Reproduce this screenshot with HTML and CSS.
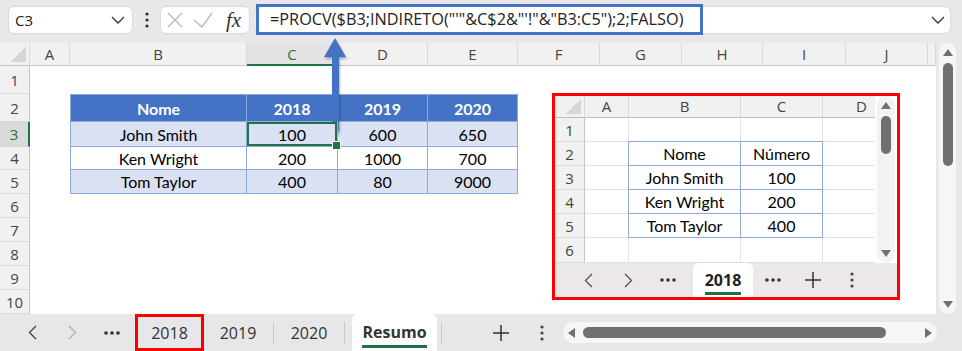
FILE: index.html
```html
<!DOCTYPE html>
<html lang="pt">
<head>
    <meta charset="UTF-8">
    <meta name="viewport" content="width=device-width, initial-scale=1.0">
    <title>PROCV com INDIRETO</title>
    <link rel="stylesheet" href="styles.css">
</head>

<body>
    <div class="app">
        <!-- barra de fórmulas -->
        <div class="topbar">
            <div class="namebox">
                <span>C3</span>
                <svg width="14" height="8" viewBox="0 0 14 8"><path d="M1 1l6 6 6-6" fill="none" stroke="#333" stroke-width="1.3"/></svg>
            </div>
            <div class="grip">
                <svg width="4" height="16" viewBox="0 0 4 16"><circle cx="2" cy="2" r="1.6" fill="#333"/><circle cx="2" cy="8" r="1.6" fill="#333"/><circle cx="2" cy="14" r="1.6" fill="#333"/></svg>
            </div>
            <div class="fxbox">
                <svg class="ico-x" width="16" height="16" viewBox="0 0 16 16"><path d="M1 1l14 14M15 1L1 15" stroke="#b8b8b8" stroke-width="1.3"/></svg>
                <svg class="ico-ok" width="20" height="16" viewBox="0 0 20 16"><path d="M1 8l8 7L19 1" fill="none" stroke="#b8b8b8" stroke-width="1.3"/></svg>
                <span class="fx">fx</span>
            </div>
            <div class="formula">
                <span class="formula-hl">=PROCV($B3;INDIRETO("'"&amp;C$2&amp;"'!"&amp;"B3:C5");2;FALSO)</span>
                <svg class="formula-chev" width="14" height="8" viewBox="0 0 14 8"><path d="M1 1l6 6 6-6" fill="none" stroke="#333" stroke-width="1.3"/></svg>
            </div>
        </div>

        <!-- planilha Resumo -->
        <div class="main">
            <div class="sheet">
                <div class="ch corner"></div>
                <div class="ch">A</div>
                <div class="ch">B</div>
                <div class="ch sel">C</div>
                <div class="ch">D</div>
                <div class="ch">E</div>
                <div class="ch">F</div>
                <div class="ch">G</div>
                <div class="ch">H</div>
                <div class="ch">I</div>
                <div class="ch">J</div>
                <div class="ch"></div>

                <div class="rh">1</div>
                <div class="rh">2</div>
                <div class="rh sel">3</div>
                <div class="rh">4</div>
                <div class="rh">5</div>
                <div class="rh">6</div>
                <div class="rh">7</div>
                <div class="rh">8</div>
                <div class="rh">9</div>
                <div class="rh">10</div>

                <div class="data">
                    <div class="hd">Nome</div>
                    <div class="hd">2018</div>
                    <div class="hd">2019</div>
                    <div class="hd">2020</div>

                    <div class="band">John Smith</div>
                    <div class="band cur">100</div>
                    <div class="band">600</div>
                    <div class="band">650</div>

                    <div>Ken Wright</div>
                    <div>200</div>
                    <div>1000</div>
                    <div>700</div>

                    <div class="band">Tom Taylor</div>
                    <div class="band">400</div>
                    <div class="band">80</div>
                    <div class="band">9000</div>
                </div>
            </div>

            <div class="vscroll">
                <div class="vtrack">
                    <div class="tri-up"></div>
                    <div class="vthumb"></div>
                    <div class="tri-down"></div>
                </div>
            </div>
        </div>

        <!-- abas -->
        <div class="tabbar">
            <div class="nav">
                <svg width="9" height="15" viewBox="0 0 9 15"><path d="M8 1L1.5 7.5 8 14" fill="none" stroke="#444" stroke-width="1.4"/></svg>
            </div>
            <div class="nav">
                <svg width="9" height="15" viewBox="0 0 9 15"><path d="M1 1l6.5 6.5L1 14" fill="none" stroke="#b0b0b0" stroke-width="1.4"/></svg>
            </div>
            <div class="nav">
                <svg width="16" height="4" viewBox="0 0 16 4"><circle cx="2" cy="2" r="1.8" fill="#333"/><circle cx="8" cy="2" r="1.8" fill="#333"/><circle cx="14" cy="2" r="1.8" fill="#333"/></svg>
            </div>
            <div class="tab mark">2018</div>
            <div class="tab">2019</div>
            <div class="sep"></div>
            <div class="tab">2020</div>
            <div class="sep"></div>
            <div class="tab active"><span>Resumo</span></div>
            <div class="sep"></div>
            <div class="nav add">
                <svg width="18" height="18" viewBox="0 0 18 18"><path d="M9 1v16M1 9h16" stroke="#333" stroke-width="1.5"/></svg>
            </div>
            <div class="nav more">
                <svg width="4" height="16" viewBox="0 0 4 16"><circle cx="2" cy="2" r="1.6" fill="#444"/><circle cx="2" cy="8" r="1.6" fill="#444"/><circle cx="2" cy="14" r="1.6" fill="#444"/></svg>
            </div>
            <div class="hscroll">
                <div class="tri-left"></div>
                <div class="hthumb"></div>
                <div class="tri-right"></div>
            </div>
        </div>

        <!-- recorte da planilha 2018 -->
        <div class="inset">
            <div class="mini-top">
                <div class="mini-grid">
                    <div class="mch corner"></div>
                    <div class="mch">A</div>
                    <div class="mch">B</div>
                    <div class="mch">C</div>
                    <div class="mch">D</div>

                    <div class="mrh">1</div>
                    <div class="mc"></div><div class="mc"></div><div class="mc"></div><div class="mc"></div>
                    <div class="mrh">2</div>
                    <div class="mc"></div><div class="mc"></div>
                    <div class="mrh">3</div>
                    <div class="mc"></div><div class="mc"></div>
                    <div class="mrh">4</div>
                    <div class="mc"></div><div class="mc"></div>
                    <div class="mrh">5</div>
                    <div class="mc"></div><div class="mc"></div>
                    <div class="mrh">6</div>
                    <div class="mc"></div><div class="mc"></div><div class="mc"></div><div class="mc"></div>

                    <div class="mini-data">
                        <div>Nome</div>
                        <div>Número</div>
                        <div>John Smith</div>
                        <div>100</div>
                        <div>Ken Wright</div>
                        <div>200</div>
                        <div>Tom Taylor</div>
                        <div>400</div>
                    </div>
                </div>
                <div class="mini-scroll">
                    <div class="mini-track">
                        <div class="tri-up"></div>
                        <div class="mini-thumb"></div>
                        <div class="tri-down"></div>
                    </div>
                </div>
            </div>
            <div class="mini-tabs">
                <div class="nav">
                    <svg width="9" height="15" viewBox="0 0 9 15"><path d="M8 1L1.5 7.5 8 14" fill="none" stroke="#555" stroke-width="1.4"/></svg>
                </div>
                <div class="nav">
                    <svg width="9" height="15" viewBox="0 0 9 15"><path d="M1 1l6.5 6.5L1 14" fill="none" stroke="#555" stroke-width="1.4"/></svg>
                </div>
                <div class="nav">
                    <svg width="16" height="4" viewBox="0 0 16 4"><circle cx="2" cy="2" r="1.8" fill="#333"/><circle cx="8" cy="2" r="1.8" fill="#333"/><circle cx="14" cy="2" r="1.8" fill="#333"/></svg>
                </div>
                <div class="mini-tab"><span>2018</span></div>
                <div class="nav">
                    <svg width="16" height="4" viewBox="0 0 16 4"><circle cx="2" cy="2" r="1.8" fill="#333"/><circle cx="8" cy="2" r="1.8" fill="#333"/><circle cx="14" cy="2" r="1.8" fill="#333"/></svg>
                </div>
                <div class="nav">
                    <svg width="18" height="18" viewBox="0 0 18 18"><path d="M9 1v16M1 9h16" stroke="#333" stroke-width="1.5"/></svg>
                </div>
                <div class="nav more">
                    <svg width="4" height="16" viewBox="0 0 4 16"><circle cx="2" cy="2" r="1.6" fill="#444"/><circle cx="2" cy="8" r="1.6" fill="#444"/><circle cx="2" cy="14" r="1.6" fill="#444"/></svg>
                </div>
            </div>
        </div>

        <!-- seta apontando para a fórmula -->
        <svg class="arrow" width="36" height="100" viewBox="0 0 36 100">
            <path d="M17 4L28 23H21V95a3 3 0 0 1-7 0V23H6z" fill="#4472c4"/>
        </svg>
    </div>
</body>
</html>
```

FILE: styles.css
```css
*
{
    box-sizing: border-box;
}

body
{
    margin: 0;
    background: #fff;
    font-family: "Open Sans", "Noto Sans", sans-serif;
    color: #222;
}

.app
{
    position: relative;
    width: 962px;
    height: 351px;
    overflow: hidden;
}

/* barra de fórmulas */
.topbar
{
    height: 43px;
    background: #e9e7ea;
    display: flex;
    align-items: flex-start;
    padding-top: 6px;
}

.namebox
{
    margin-left: 8px;
    width: 125px;
    height: 28px;
    background: #fff;
    border: 1px solid #dcd9dc;
    border-radius: 6px;
    display: flex;
    align-items: center;
    justify-content: space-between;
    padding: 0 7px 0 6px;
    font-size: 15px;
}

.grip
{
    width: 27px;
    height: 28px;
    display: flex;
    align-items: center;
    justify-content: center;
}

.fxbox
{
    width: 90px;
    height: 28px;
    background: #fff;
    border: 1px solid #dcd9dc;
    border-radius: 6px;
    display: flex;
    align-items: center;
}

.ico-x
{
    margin-left: 6px;
}

.ico-ok
{
    margin-left: 10px;
}

.fx
{
    margin-left: 13px;
    font-family: "Liberation Serif", serif;
    font-style: italic;
    font-size: 21px;
    color: #333;
    line-height: 1;
}

.formula
{
    margin-left: 6px;
    width: 695px;
    height: 28px;
    background: #fff;
    border: 1px solid #dcd9dc;
    border-radius: 6px;
    display: flex;
    align-items: flex-start;
}

.formula-hl
{
    margin: -3px 0 0 -1px;
    width: 447px;
    height: 31px;
    border: 3px solid #4472c4;
    padding-left: 11px;
    font-size: 16.3px;
    line-height: 25px;
    white-space: nowrap;
}

.formula-chev
{
    margin: 9px 5px 0 auto;
}

/* planilha */
.main
{
    display: flex;
    height: 271px;
}

.sheet
{
    width: 936px;
    display: grid;
    grid-template-columns: 30px 40px 177px 91px 90px 90px 82px 82px 81px 83px 82px 8px;
    grid-template-rows: 23px 28px 28px 25px 23px repeat(6, 24px);
    background: #fff;
}

.ch
{
    background: #f1f1f1;
    border-right: 1px solid #dadada;
    border-bottom: 1px solid #c4c4c4;
    text-align: center;
    font-size: 15px;
    line-height: 22px;
    color: #444;
}

.ch.sel
{
    background: #e3e3e3;
    color: #217346;
    border-bottom: 2px solid #217346;
}

.corner
{
    position: relative;
}

.corner::after
{
    content: "";
    position: absolute;
    right: 3px;
    bottom: 3px;
    width: 15px;
    height: 15px;
    background: linear-gradient(to top left, #d6d6d6 50%, transparent 50%);
}

.rh
{
    grid-column: 1;
    background: #f1f1f1;
    border-right: 1px solid #c4c4c4;
    border-bottom: 1px solid #dadada;
    display: flex;
    align-items: center;
    justify-content: center;
    font-size: 15px;
    color: #444;
}

.rh.sel
{
    background: #dadada;
    color: #217346;
    border-right: 2px solid #217346;
}

.data
{
    grid-column: 3 / 7;
    grid-row: 3 / 7;
    display: grid;
    grid-template-columns: 176px 91px 90px 90px;
    grid-template-rows: 27px 25px 23px 24px;
    border-left: 1px solid #8eaadb;
    border-top: 1px solid #8eaadb;
    font-family: "Lato", sans-serif;
    font-size: 16px;
    color: #000;
}

.data > div
{
    border-right: 1px solid #8eaadb;
    border-bottom: 1px solid #8eaadb;
    display: flex;
    align-items: center;
    justify-content: center;
}

.data .hd
{
    background: #4472c4;
    color: #fff;
    font-weight: bold;
}

.data .band
{
    background: #d9e1f2;
}

.data .cur
{
    position: relative;
    z-index: 1;
    box-shadow: inset 0 0 0 2px #217346;
}

.data .cur::after
{
    content: "";
    position: absolute;
    right: -4px;
    bottom: -4px;
    width: 7px;
    height: 7px;
    background: #217346;
    border: 1px solid #fff;
}

.vscroll
{
    width: 26px;
    background: #e8e8e8;
    padding: 0 6px 0 3px;
}

.vtrack
{
    height: 100%;
    border-radius: 9px;
    background: #f6f6f6;
    display: flex;
    flex-direction: column;
    align-items: center;
    padding: 6px 0;
}

.tri-up
{
    border-left: 5px solid transparent;
    border-right: 5px solid transparent;
    border-bottom: 7px solid #707070;
}

.tri-down
{
    margin-top: auto;
    border-left: 5px solid transparent;
    border-right: 5px solid transparent;
    border-top: 7px solid #707070;
}

.vthumb
{
    margin-top: 7px;
    width: 10px;
    height: 103px;
    border-radius: 5px;
    background: #707070;
}

/* abas */
.tabbar
{
    height: 37px;
    background: #e7e6e9;
    display: flex;
    align-items: center;
    padding-left: 12px;
}

.nav
{
    width: 40px;
    height: 100%;
    display: flex;
    align-items: center;
    justify-content: center;
}

.tab
{
    width: 68px;
    height: 100%;
    display: flex;
    align-items: center;
    justify-content: center;
    font-size: 16px;
    color: #333;
}

.tab.mark
{
    margin-left: 3px;
    width: 69px;
    border: 3px solid #f00;
}

.sep
{
    width: 1px;
    height: 22px;
    margin: 0 1px;
    background: #cacaca;
}

.tab.active
{
    margin-left: 6px;
    width: 85px;
    background: #fff;
    border-radius: 6px 6px 0 0;
    font-weight: bold;
    padding-top: 2px;
}

.tab.active span
{
    padding-bottom: 1px;
    border-bottom: 3px solid #1e7145;
    line-height: 24px;
}

.tab.active + .sep
{
    margin-left: 4px;
}

.nav.add
{
    margin-left: 38px;
}

.nav.more
{
    width: 30px;
    margin-left: 6px;
}

.hscroll
{
    margin-left: 6px;
    width: 374px;
    height: 21px;
    border-radius: 11px;
    background: #f6f6f6;
    display: flex;
    align-items: center;
    padding: 0 5px;
}

.tri-left
{
    border-top: 5px solid transparent;
    border-bottom: 5px solid transparent;
    border-right: 7px solid #707070;
}

.tri-right
{
    margin-left: auto;
    border-top: 5px solid transparent;
    border-bottom: 5px solid transparent;
    border-left: 7px solid #707070;
}

.hthumb
{
    margin-left: 8px;
    width: 303px;
    height: 11px;
    border-radius: 6px;
    background: #707070;
}

/* recorte 2018 */
.inset
{
    position: absolute;
    left: 552px;
    top: 93px;
    width: 348px;
    height: 207px;
    border: 3px solid #f00;
    background: #fff;
    display: flex;
    flex-direction: column;
}

.mini-top
{
    display: flex;
    height: 167px;
}

.mini-grid
{
    width: 320px;
    overflow: hidden;
    display: grid;
    grid-template-columns: 30px 44px 112px 82px 78px;
    grid-template-rows: 22px repeat(5, 24px) 25px;
}

.mch
{
    background: #f1f1f1;
    border-right: 1px solid #dadada;
    border-bottom: 1px solid #bdbdbd;
    text-align: center;
    font-size: 15px;
    line-height: 21px;
    color: #444;
}

.mrh
{
    background: #f1f1f1;
    border-right: 1px solid #c4c4c4;
    border-bottom: 1px solid #dadada;
    display: flex;
    align-items: center;
    justify-content: center;
    font-size: 15px;
    color: #444;
}

.mc
{
    border-right: 1px solid #e1e1e1;
    border-bottom: 1px solid #e1e1e1;
}

.mini-data
{
    grid-column: 3 / 5;
    grid-row: 3 / 7;
    margin: -1px 0 0 -1px;
    display: grid;
    grid-template-columns: 112px 82px;
    grid-template-rows: repeat(4, 24px);
    border-left: 1px solid #8eaadb;
    border-top: 1px solid #8eaadb;
    font-family: "Lato", sans-serif;
    font-size: 16px;
    color: #000;
}

.mini-data > div
{
    border-right: 1px solid #8eaadb;
    border-bottom: 1px solid #8eaadb;
    display: flex;
    align-items: center;
    justify-content: center;
    background: #fff;
}

.mini-scroll
{
    width: 22px;
    padding: 0 2px;
}

.mini-track
{
    height: 100%;
    border-radius: 9px;
    background: #f3f3f3;
    display: flex;
    flex-direction: column;
    align-items: center;
    padding: 6px 0;
}

.mini-thumb
{
    margin-top: 7px;
    width: 10px;
    height: 38px;
    border-radius: 5px;
    background: #707070;
}

.mini-tabs
{
    height: 34px;
    background: #ebe7ea;
    display: flex;
    align-items: center;
    padding-left: 13px;
}

.mini-tab
{
    margin-left: 5px;
    width: 60px;
    height: 100%;
    background: #fff;
    border-radius: 6px 6px 0 0;
    display: flex;
    align-items: center;
    justify-content: center;
    font-size: 16px;
    font-weight: bold;
    color: #222;
    padding-top: 2px;
}

.mini-tab span
{
    border-bottom: 3px solid #1e7145;
    line-height: 24px;
}

.mini-tabs .more
{
    margin-left: 4px;
}

/* seta */
.arrow
{
    position: absolute;
    left: 318px;
    top: 34px;
    filter: drop-shadow(1px 2px 1px rgba(0, 0, 0, 0.3));
}
```
